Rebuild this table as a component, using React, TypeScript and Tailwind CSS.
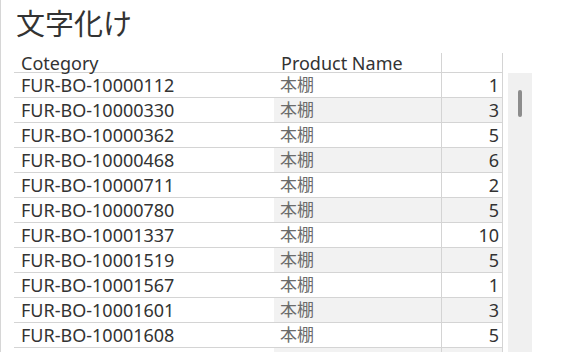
const rows: [string, number][] = [
  ['FUR-BO-10000112', 1],
  ['FUR-BO-10000330', 3],
  ['FUR-BO-10000362', 5],
  ['FUR-BO-10000468', 6],
  ['FUR-BO-10000711', 2],
  ['FUR-BO-10000780', 5],
  ['FUR-BO-10001337', 10],
  ['FUR-BO-10001519', 5],
  ['FUR-BO-10001567', 1],
  ['FUR-BO-10001601', 3],
  ['FUR-BO-10001608', 5],
];

export default function App() {
  return (
    <div
      className="w-[579px] h-[352px] overflow-hidden bg-white border-l border-[#d6d6d6] text-[#333333]"
      style={{ fontFamily: '"Noto Sans", "Noto Sans CJK JP", sans-serif' }}
    >
      <div className="h-[53px] pl-[15px] pt-[9px]">
        <h1 className="text-[29px] leading-[29px] text-[#333333]">文字化け</h1>
      </div>

      <div className="flex">
        <div className="ml-[13px] w-[489px]">
          {/* header */}
          <div className="flex h-[20px] border-b border-[#d4d4d4] text-[18px] leading-[20px]">
            <div className="w-[260px] pl-[7px]">Cotegory</div>
            <div className="w-[168px] pl-[7px] border-r border-[#d4d4d4]">Product Name</div>
            <div className="flex-1 border-r border-[#d4d4d4]"></div>
          </div>

          {rows.map(([cat, n], i) => (
            <div key={cat} className="flex h-[25px] border-b border-[#d4d4d4] text-[18px]">
              <div className="w-[260px] pl-[7px] flex items-center">{cat}</div>
              <div
                className={
                  'w-[168px] pl-[6px] flex items-center text-[17px] text-[#6b6b6b] border-r border-[#d4d4d4] ' +
                  (i % 2 === 1 ? 'bg-[#f2f2f2]' : 'bg-white')
                }
              >
                本棚
              </div>
              <div
                className={
                  'flex-1 flex items-center justify-end pr-[3px] border-r border-[#d4d4d4] ' +
                  (i % 2 === 1 ? 'bg-[#f2f2f2]' : 'bg-white')
                }
              >
                {n}
              </div>
            </div>
          ))}
          {/* next row, scrolled out of view */}
          <div className="flex h-[25px]">
            <div className="w-[260px]"></div>
            <div className="w-[168px] bg-[#f2f2f2] border-r border-[#d4d4d4]"></div>
            <div className="flex-1 bg-[#f2f2f2] border-r border-[#d4d4d4]"></div>
          </div>
        </div>

        <div className="ml-[5px] mt-[20px] w-[24px] h-[300px] bg-[#f0f0f0] flex justify-center">
          <div className="mt-[17px] w-[4px] h-[27px] rounded-full bg-[#8c8c8c]"></div>
        </div>
      </div>
    </div>
  );
}
